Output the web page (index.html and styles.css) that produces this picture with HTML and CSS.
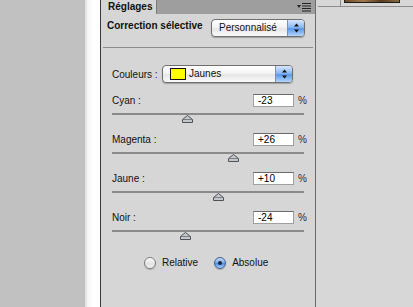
FILE: index.html
```html
<!DOCTYPE html>
<html lang="fr">
<head>
    <meta charset="UTF-8">
    <meta name="viewport" content="width=device-width, initial-scale=1.0">
    <title>Réglages - Correction sélective</title>
    <link rel="stylesheet" href="styles.css">
</head>
<body>
    <div class="screen">
        <div class="desk"></div>
        <div class="shade"></div>

        <div class="panel">
            <div class="tabbar">
                <div class="tab">Réglages</div>
                <svg class="menu" width="16" height="10" viewBox="0 0 16 10">
                    <polygon points="1,3 5,3 3,6" fill="#222"/>
                    <rect x="6" y="1" width="9" height="1" fill="#222"/>
                    <rect x="6" y="3.5" width="9" height="1" fill="#222"/>
                    <rect x="6" y="6" width="9" height="1" fill="#222"/>
                    <rect x="6" y="8.5" width="9" height="1" fill="#222"/>
                </svg>
            </div>

            <div class="header">
                <span class="title">Correction sélective</span>
                <div class="popup preset">
                    <span class="popup-text">Personnalisé</span>
                    <span class="popup-arrows">
                        <svg width="7" height="10" viewBox="0 0 7 10">
                            <polygon points="3.5,0.5 6,3.5 1,3.5" fill="#111"/>
                            <polygon points="1,6.5 6,6.5 3.5,9.5" fill="#111"/>
                        </svg>
                    </span>
                </div>
            </div>

            <div class="sep"></div>

            <div class="body">
                <div class="colors">
                    <span class="label">Couleurs :</span>
                    <div class="popup colors-popup">
                        <span class="swatch"></span>
                        <span class="popup-text">Jaunes</span>
                        <span class="popup-arrows">
                            <svg width="7" height="10" viewBox="0 0 7 10">
                                <polygon points="3.5,0.5 6,3.5 1,3.5" fill="#111"/>
                                <polygon points="1,6.5 6,6.5 3.5,9.5" fill="#111"/>
                            </svg>
                        </span>
                    </div>
                </div>

                <div class="slider">
                    <div class="slider-row">
                        <span class="label">Cyan :</span>
                        <span class="value">-23</span>
                        <span class="pct">%</span>
                    </div>
                    <div class="track">
                        <svg class="thumb" style="left: 39%" width="11" height="8" viewBox="0 0 11 8">
                            <polygon points="5.5,0.5 10.5,4.5 10.5,7.5 0.5,7.5 0.5,4.5" fill="#c4c8cc" stroke="#4e5256"/>
                            <line x1="1" y1="4.5" x2="10" y2="4.5" stroke="#7a7e82"/>
                        </svg>
                    </div>
                </div>

                <div class="slider">
                    <div class="slider-row">
                        <span class="label">Magenta :</span>
                        <span class="value">+26</span>
                        <span class="pct">%</span>
                    </div>
                    <div class="track">
                        <svg class="thumb" style="left: 63%" width="11" height="8" viewBox="0 0 11 8">
                            <polygon points="5.5,0.5 10.5,4.5 10.5,7.5 0.5,7.5 0.5,4.5" fill="#c4c8cc" stroke="#4e5256"/>
                            <line x1="1" y1="4.5" x2="10" y2="4.5" stroke="#7a7e82"/>
                        </svg>
                    </div>
                </div>

                <div class="slider">
                    <div class="slider-row">
                        <span class="label">Jaune :</span>
                        <span class="value">+10</span>
                        <span class="pct">%</span>
                    </div>
                    <div class="track">
                        <svg class="thumb" style="left: 55%" width="11" height="8" viewBox="0 0 11 8">
                            <polygon points="5.5,0.5 10.5,4.5 10.5,7.5 0.5,7.5 0.5,4.5" fill="#c4c8cc" stroke="#4e5256"/>
                            <line x1="1" y1="4.5" x2="10" y2="4.5" stroke="#7a7e82"/>
                        </svg>
                    </div>
                </div>

                <div class="slider">
                    <div class="slider-row">
                        <span class="label">Noir :</span>
                        <span class="value">-24</span>
                        <span class="pct">%</span>
                    </div>
                    <div class="track">
                        <svg class="thumb" style="left: 38%" width="11" height="8" viewBox="0 0 11 8">
                            <polygon points="5.5,0.5 10.5,4.5 10.5,7.5 0.5,7.5 0.5,4.5" fill="#c4c8cc" stroke="#4e5256"/>
                            <line x1="1" y1="4.5" x2="10" y2="4.5" stroke="#7a7e82"/>
                        </svg>
                    </div>
                </div>

                <div class="modes">
                    <label class="mode"><span class="radio"></span>Relative</label>
                    <label class="mode"><span class="radio checked"></span>Absolue</label>
                </div>
            </div>
        </div>

        <div class="side">
            <div class="side-top">
                <div class="side-cell"></div>
                <div class="thumbnail"></div>
            </div>
        </div>
    </div>
</body>
</html>
```

FILE: styles.css
```css
body {
    margin: 0;
    font-family: 'Liberation Sans', Arial, sans-serif;
    font-size: 10px;
    color: #111;
    overflow: hidden;
}
.screen {
    display: flex;
    height: 307px;
    width: 413px;
}
.desk {
    width: 85px;
    background-color: #c1c1c1;
}
.shade {
    width: 15px;
    background: linear-gradient(to right, #dedede, #f6f6f6 3px, #ffffff 8px);
}

/* panel */
.panel {
    width: 214px;
    background-color: #d6d6d6;
    border-left: 1px solid #3a3a3a;
    border-right: 1px solid #6c6c6c;
    display: flex;
    flex-direction: column;
}
.tabbar {
    height: 14px;
    background-color: #9e9e9e;
    display: flex;
    justify-content: space-between;
    align-items: center;
    padding-right: 3px;
}
.tab {
    height: 14px;
    width: 48px;
    padding-left: 7px;
    background-color: #d6d6d6;
    border-right: 1px solid #7a7a7a;
    font-weight: bold;
    line-height: 13px;
}
.menu {
    display: block;
}
.header {
    display: flex;
    justify-content: space-between;
    padding: 5px 10px 0 6px;
}
.title {
    font-weight: bold;
    line-height: 12px;
    padding-top: 1px;
}
.sep {
    height: 1px;
    margin: 10px 2px 0 2px;
    background-color: #8b8b8b;
}

/* popup menus */
.popup {
    height: 16px;
    border: 1px solid #6f6f6f;
    border-radius: 4px;
    background: linear-gradient(#ffffff, #f4f4f4 45%, #e6e6e6 55%, #fafafa);
    box-shadow: 0 1px 1px rgba(0, 0, 0, 0.25);
    display: flex;
    align-items: center;
    overflow: hidden;
}
.popup-text {
    flex: 1;
    line-height: 16px;
}
.popup-arrows {
    width: 16px;
    height: 16px;
    border-left: 1px solid #7f8fae;
    background: linear-gradient(#d6e7fc, #8bb8f3 45%, #5a97e9 55%, #b5d6fc);
    display: flex;
    align-items: center;
    justify-content: center;
}
.preset {
    width: 85px;
    padding-left: 7px;
}
.body {
    padding: 17px 11px 0 11px;
}
.colors {
    display: flex;
    align-items: center;
}
.colors .label {
    width: 50px;
}
.colors-popup {
    width: 122px;
    padding-left: 7px;
}
.swatch {
    width: 14px;
    height: 10px;
    border: 1px solid #111;
    background-color: #ffff00;
    margin-right: 3px;
}

/* sliders */
.slider {
    margin-bottom: 18px;
}
.colors + .slider {
    margin-top: 11px;
}
.slider-row {
    display: flex;
    align-items: center;
    height: 13px;
}
.slider-row .label {
    flex: 1;
}
.value {
    width: 35px;
    height: 11px;
    line-height: 11px;
    padding-left: 4px;
    background-color: #ffffff;
    border: 1px solid #a0a0a0;
    border-top-color: #6a6a6a;
    color: #000;
}
.pct {
    width: 6px;
    margin-left: 4px;
    color: #2a2a3a;
}
.track {
    position: relative;
    height: 2px;
    margin-top: 6px;
    background-color: #8a8a8a;
}
.thumb {
    position: absolute;
    top: 2px;
    margin-left: -5px;
    display: block;
}

/* radio buttons */
.modes {
    display: flex;
    gap: 16px;
    padding: 7px 0 0 32px;
}
.mode {
    display: flex;
    align-items: center;
    gap: 6px;
    line-height: 12px;
}
.radio {
    width: 10px;
    height: 10px;
    border: 1px solid #7c7c7c;
    border-radius: 50%;
    background: linear-gradient(#fdfdfd, #e2e2e2 60%, #f4f4f4);
    box-shadow: 0 1px 1px rgba(0, 0, 0, 0.2);
    display: flex;
    align-items: center;
    justify-content: center;
}
.radio.checked {
    border-color: #3f5f8f;
    background: linear-gradient(#c6ddf8, #7fb0ee 45%, #4f8ee3 55%, #a9d0fb);
}
.radio.checked::after {
    content: "";
    width: 4px;
    height: 4px;
    border-radius: 50%;
    background-color: #1b2738;
}

/* right side */
.side {
    flex: 1;
    background-color: #d7d7d7;
    padding-left: 2px;
}
.side-top {
    display: flex;
    height: 6px;
    border-bottom: 1px solid #8c8c8c;
}
.side-cell {
    width: 22px;
    border-right: 1px solid #8c8c8c;
}
.thumbnail {
    width: 54px;
    height: 2px;
    margin-left: 3px;
    border: 1px solid #1e1a14;
    border-top: none;
    background: linear-gradient(to right, #6b4a2c, #a07a4c, #5a3c22, #8a6a40);
}
```
